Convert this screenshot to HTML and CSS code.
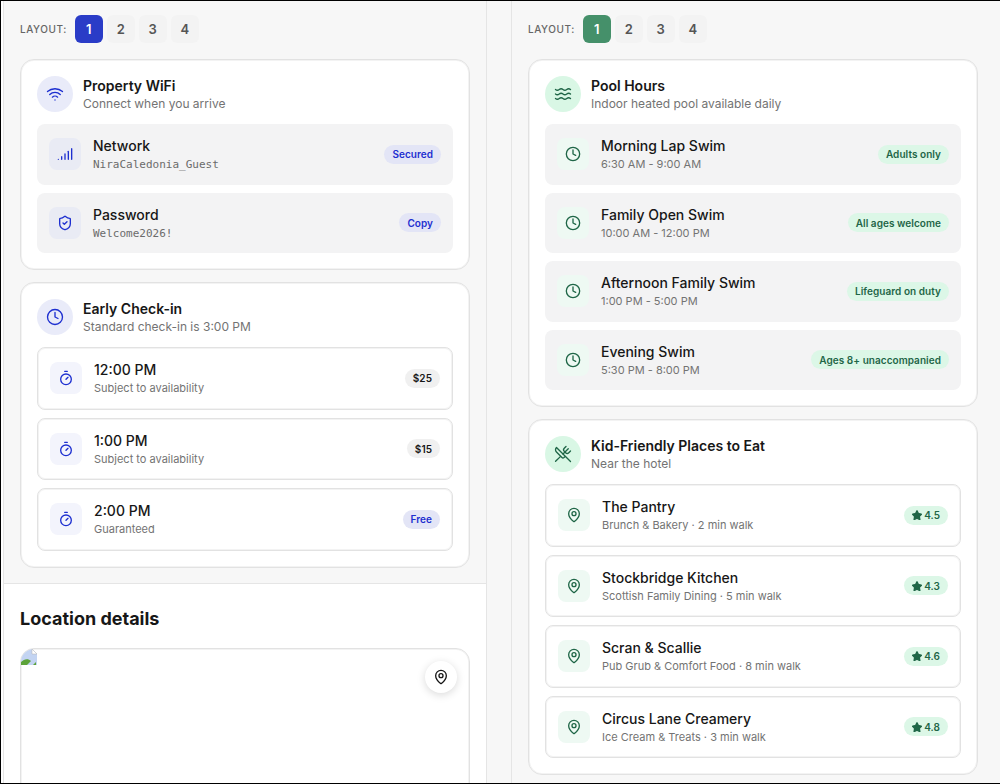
FILE: index.html
```html
<!DOCTYPE html>
<html lang="en">
<head>
<meta charset="utf-8">
<title>Property guide</title>
<link rel="stylesheet" href="styles.css">
</head>
<body>
<svg class="sprite" width="0" height="0" aria-hidden="true">
  <defs>
    <symbol id="i-wifi" viewBox="0 0 24 24"><path d="M2 8.8a15 15 0 0 1 20 0"/><path d="M5 12.6a10 10 0 0 1 14 0"/><path d="M8.5 16.2a5 5 0 0 1 7 0"/><path d="M12 20h.01"/></symbol>
    <symbol id="i-signal" viewBox="0 0 24 24"><path d="M2 20h.01"/><path d="M7 20v-4"/><path d="M12 20v-8"/><path d="M17 20V8"/><path d="M22 20V4"/></symbol>
    <symbol id="i-shield" viewBox="0 0 24 24"><path d="M20 13c0 5-3.500 7.500-7.660 8.950a1 1 0 0 1-.67-.01C7.500 20.500 4 18 4 13V6a1 1 0 0 1 1-1c2 0 4.500-1.200 6.240-2.720a1.170 1.170 0 0 1 1.520 0C14.510 3.810 17 5 19 5a1 1 0 0 1 1 1z"/><path d="m9 12 2 2 4-4"/></symbol>
    <symbol id="i-clock" viewBox="0 0 24 24"><circle cx="12" cy="12" r="10"/><path d="M12 6v6l4 2"/></symbol>
    <symbol id="i-timer" viewBox="0 0 24 24"><path d="M10 2h4"/><path d="m12 14 3-3"/><circle cx="12" cy="14" r="8"/></symbol>
    <symbol id="i-waves" viewBox="0 0 24 24"><path d="M2 6c.6.500 1.200 1 2.500 1C7 7 7 5 9.500 5c2.600 0 2.400 2 5 2 2.500 0 2.500-2 5-2 1.300 0 1.900.5 2.500 1"/><path d="M2 12c.6.500 1.200 1 2.500 1 2.500 0 2.500-2 5-2 2.600 0 2.400 2 5 2 2.500 0 2.500-2 5-2 1.300 0 1.900.5 2.500 1"/><path d="M2 18c.6.500 1.200 1 2.500 1 2.500 0 2.500-2 5-2 2.600 0 2.400 2 5 2 2.500 0 2.500-2 5-2 1.300 0 1.900.5 2.500 1"/></symbol>
    <symbol id="i-food" viewBox="0 0 24 24"><path d="m16 2-2.300 2.300a3 3 0 0 0 0 4.200l1.800 1.800a3 3 0 0 0 4.200 0L22 8"/><path d="M15 15 3.300 3.300a4.200 4.200 0 0 0 0 6l7.300 7.300c.7.700 2 .7 2.800 0L15 15Zm0 0 7 7"/><path d="m2.100 21.800 6.400-6.300"/><path d="m19 5-7 7"/></symbol>
    <symbol id="i-pin" viewBox="0 0 24 24"><path d="M20 10c0 5-5.500 10.200-7.400 11.800a1 1 0 0 1-1.200 0C9.500 20.200 4 15 4 10a8 8 0 0 1 16 0"/><circle cx="12" cy="10" r="3"/></symbol>
    <symbol id="i-star" viewBox="0 0 24 24"><path class="fill" d="M11.500 2.300a.5.5 0 0 1 1 0l2.600 5.300a2 2 0 0 0 1.500 1.100l5.800.9a.5.5 0 0 1 .3.900l-4.200 4.100a2 2 0 0 0-.6 1.800l1 5.800a.5.5 0 0 1-.8.600l-5.200-2.800a2 2 0 0 0-1.900 0l-5.200 2.800a.5.5 0 0 1-.8-.6l1-5.800a2 2 0 0 0-.6-1.800L1.300 10.500a.5.5 0 0 1 .3-.9l5.800-.9a2 2 0 0 0 1.500-1.100z"/></symbol>
  </defs>
</svg>

<main class="page">
  <section class="column column-left theme-blue">
    <div class="panel">
      <div class="layout-bar">
        <span class="layout-label">LAYOUT:</span>
        <span class="layout-btn active">1</span><span class="layout-btn">2</span><span class="layout-btn">3</span><span class="layout-btn">4</span>
      </div>

      <article class="card">
        <header class="card-head">
          <span class="head-icon"><svg class="ic"><use href="#i-wifi"/></svg></span>
          <div><h2>Property WiFi</h2><p>Connect when you arrive</p></div>
        </header>
        <div class="rows rows-filled">
          <div class="row filled">
            <span class="row-icon muted"><svg class="ic"><use href="#i-signal"/></svg></span>
            <div class="row-text"><h3>Network</h3><p class="mono">NiraCaledonia_Guest</p></div>
            <span class="pill strong">Secured</span>
          </div>
          <div class="row filled">
            <span class="row-icon muted"><svg class="ic"><use href="#i-shield"/></svg></span>
            <div class="row-text"><h3>Password</h3><p class="mono">Welcome2026!</p></div>
            <span class="pill strong">Copy</span>
          </div>
        </div>
      </article>

      <article class="card">
        <header class="card-head">
          <span class="head-icon"><svg class="ic"><use href="#i-clock"/></svg></span>
          <div><h2>Early Check-in</h2><p>Standard check-in is 3:00 PM</p></div>
        </header>
        <div class="rows">
          <div class="row outlined">
            <span class="row-icon"><svg class="ic"><use href="#i-timer"/></svg></span>
            <div class="row-text"><h3>12:00 PM</h3><p>Subject to availability</p></div>
            <span class="pill neutral">$25</span>
          </div>
          <div class="row outlined">
            <span class="row-icon"><svg class="ic"><use href="#i-timer"/></svg></span>
            <div class="row-text"><h3>1:00 PM</h3><p>Subject to availability</p></div>
            <span class="pill neutral">$15</span>
          </div>
          <div class="row outlined">
            <span class="row-icon"><svg class="ic"><use href="#i-timer"/></svg></span>
            <div class="row-text"><h3>2:00 PM</h3><p>Guaranteed</p></div>
            <span class="pill">Free</span>
          </div>
        </div>
      </article>
    </div>

    <div class="location">
      <h2>Location details</h2>
      <div class="map">
        <svg class="broken" viewBox="0 0 16 16" aria-hidden="true"><path class="b-sky" d="M0 16V0h11l5 5v11z"/><path class="b-corner" d="M11 0v5h5z"/><path class="b-hill" d="M0 16v-3c3-3 7-4 10-1l-4 4z"/><path class="b-hill2" d="M12 16l3-3v3z"/></svg>
        <span class="map-btn"><svg class="ic"><use href="#i-pin"/></svg></span>
      </div>
    </div>
  </section>

  <section class="column column-right theme-green">
    <div class="panel">
      <div class="layout-bar">
        <span class="layout-label">LAYOUT:</span>
        <span class="layout-btn active">1</span><span class="layout-btn">2</span><span class="layout-btn">3</span><span class="layout-btn">4</span>
      </div>

      <article class="card">
        <header class="card-head">
          <span class="head-icon"><svg class="ic"><use href="#i-waves"/></svg></span>
          <div><h2>Pool Hours</h2><p>Indoor heated pool available daily</p></div>
        </header>
        <div class="rows rows-filled">
          <div class="row filled">
            <span class="row-icon"><svg class="ic"><use href="#i-clock"/></svg></span>
            <div class="row-text"><h3>Morning Lap Swim</h3><p>6:30 AM - 9:00 AM</p></div>
            <span class="pill">Adults only</span>
          </div>
          <div class="row filled">
            <span class="row-icon"><svg class="ic"><use href="#i-clock"/></svg></span>
            <div class="row-text"><h3>Family Open Swim</h3><p>10:00 AM - 12:00 PM</p></div>
            <span class="pill">All ages welcome</span>
          </div>
          <div class="row filled">
            <span class="row-icon"><svg class="ic"><use href="#i-clock"/></svg></span>
            <div class="row-text"><h3>Afternoon Family Swim</h3><p>1:00 PM - 5:00 PM</p></div>
            <span class="pill">Lifeguard on duty</span>
          </div>
          <div class="row filled">
            <span class="row-icon"><svg class="ic"><use href="#i-clock"/></svg></span>
            <div class="row-text"><h3>Evening Swim</h3><p>5:30 PM - 8:00 PM</p></div>
            <span class="pill">Ages 8+ unaccompanied</span>
          </div>
        </div>
      </article>

      <article class="card">
        <header class="card-head">
          <span class="head-icon"><svg class="ic"><use href="#i-food"/></svg></span>
          <div><h2>Kid-Friendly Places to Eat</h2><p>Near the hotel</p></div>
        </header>
        <div class="rows">
          <div class="row outlined">
            <span class="row-icon"><svg class="ic"><use href="#i-pin"/></svg></span>
            <div class="row-text"><h3>The Pantry</h3><p>Brunch &amp; Bakery · 2 min walk</p></div>
            <span class="pill rating"><svg class="ic star"><use href="#i-star"/></svg>4.5</span>
          </div>
          <div class="row outlined">
            <span class="row-icon"><svg class="ic"><use href="#i-pin"/></svg></span>
            <div class="row-text"><h3>Stockbridge Kitchen</h3><p>Scottish Family Dining · 5 min walk</p></div>
            <span class="pill rating"><svg class="ic star"><use href="#i-star"/></svg>4.3</span>
          </div>
          <div class="row outlined">
            <span class="row-icon"><svg class="ic"><use href="#i-pin"/></svg></span>
            <div class="row-text"><h3>Scran &amp; Scallie</h3><p>Pub Grub &amp; Comfort Food · 8 min walk</p></div>
            <span class="pill rating"><svg class="ic star"><use href="#i-star"/></svg>4.6</span>
          </div>
          <div class="row outlined">
            <span class="row-icon"><svg class="ic"><use href="#i-pin"/></svg></span>
            <div class="row-text"><h3>Circus Lane Creamery</h3><p>Ice Cream &amp; Treats · 3 min walk</p></div>
            <span class="pill rating"><svg class="ic star"><use href="#i-star"/></svg>4.8</span>
          </div>
        </div>
      </article>
    </div>
  </section>
</main>
</body>
</html>
```

FILE: styles.css
```css
* { box-sizing: border-box; }
html, body { margin: 0; height: 100%; }
body {
  height: 784px;
  overflow: hidden;
  background: #f7f7f7;
  border: 1px solid #000;
  border-width: 1px 0 1px 1px;
  font-family: Inter, "Liberation Sans", sans-serif;
  color: #171717;
}
h2, h3, p { margin: 0; }
.sprite { position: absolute; }
.ic { display: block; fill: none; stroke: currentColor; stroke-width: 2; stroke-linecap: round; stroke-linejoin: round; }

.theme-blue { --accent: #2a3cc7; --strong: #1d2fd0; --head: #e9ebf9; --tile: #f3f4fc; --tile2: #e9ebf4; --pill: #e3e5f6; }
.theme-green { --accent: #45906a; --strong: #1f6647; --head: #d9f7e5; --tile: #eef9f3; --tile2: #eef9f3; --pill: #dcf7e7; }

.page { display: flex; height: 100%; gap: 24px; border-left: 2px solid #fff; overflow: hidden; }
.column { flex: none; width: 484px; display: flex; flex-direction: column; border-left: 1px solid #e5e5e5; }
.column-left { border-right: 1px solid #e5e5e5; }
.column-right { border-right: 1px solid transparent; }

.panel { padding: 14px 16px 15.5px; display: flex; flex-direction: column; gap: 12px; }
.layout-bar { display: flex; align-items: center; gap: 4px; height: 28px; margin-bottom: 4px; }
.layout-label { font-size: 10px; font-weight: 500; letter-spacing: .55px; color: #666; margin-right: 4px; }
.layout-btn {
  width: 28px; height: 28px; border-radius: 6px; background: #f3f3f3;
  display: flex; align-items: center; justify-content: center;
  font-size: 13px; font-weight: 600; color: #555;
}
.layout-btn.active { background: var(--accent); color: #fff; }

.card { background: #fff; border: 1px solid #e2e2e2; border-radius: 14px; padding: 16px; box-shadow: inset 0 0 0 1px #f3f3f3; }
.card-head { display: flex; align-items: center; gap: 10px; margin-bottom: 12px; }
.head-icon { width: 36px; height: 36px; border-radius: 50%; background: var(--head); color: var(--strong); display: flex; align-items: center; justify-content: center; flex: none; }
.head-icon .ic { width: 18px; height: 18px; stroke-width: 1.8; }
.card-head h2 { font-size: 14px; line-height: 20px; font-weight: 600; color: #171717; }
.card-head p { font-size: 12px; line-height: 16px; color: #737373; }

.rows { display: flex; flex-direction: column; gap: 8px; }
.row { display: flex; align-items: center; gap: 12px; border-radius: 8px; padding: 12px; }
.row.filled { background: #f3f3f4; }
.row.outlined { background: #fff; border: 1px solid #e2e2e2; box-shadow: inset 0 0 0 1px #f3f3f3; }
.row-icon { width: 32px; height: 32px; border-radius: 8px; background: var(--tile); color: var(--strong); display: flex; align-items: center; justify-content: center; flex: none; }
.row-icon.muted { background: var(--tile2); }
.row-icon .ic { width: 16px; height: 16px; }
.row-text { flex: 1; min-width: 0; }
.row-text h3 { font-size: 14px; line-height: 20px; font-weight: 500; color: #171717; }
.row-text p { font-size: 11px; line-height: 16.5px; color: #737373; }
.row-text p.mono { font-family: "DejaVu Sans Mono", "Liberation Mono", monospace; font-size: 11px; line-height: 15.5px; padding-top: 1px; color: #6b6b6b; }

.pill { height: 19px; padding: 0 8px; border-radius: 10px; background: var(--pill); color: var(--strong); font-size: 10px; letter-spacing: .05px; font-weight: 600; display: inline-flex; align-items: center; flex: none; }
.pill.neutral { background: #f0f0f0; color: #171717; }
.rating { gap: 2px; }
.star { width: 10px; height: 10px; stroke-width: 3; overflow: visible; }
.fill { fill: currentColor; }

.location { background: #fff; border-top: 1px solid #e5e5e5; flex: 1; padding: 23.5px 16px; }
.location h2 { font-size: 18px; line-height: 22px; font-weight: 700; color: #171717; margin-bottom: 18px; }
.map { position: relative; height: 300px; border: 1px solid #e2e2e2; border-radius: 14px; overflow: hidden; background: #fff; box-shadow: inset 0 0 0 1px #f3f3f3; }
.broken { position: absolute; left: 0; top: 0; width: 16px; height: 16px; }
.b-sky { fill: #c3d4f2; }
.b-corner { fill: #fff; stroke: #b0b0b0; stroke-width: .5; }
.b-hill { fill: #5da33a; }
.b-hill2 { fill: #5da33a; }
.map-btn { position: absolute; top: 12px; right: 12px; width: 32px; height: 32px; border-radius: 50%; background: #fff; box-shadow: 0 2px 8px rgba(0,0,0,.15); color: #171717; display: flex; align-items: center; justify-content: center; }
.map-btn .ic { width: 16px; height: 16px; }
```
